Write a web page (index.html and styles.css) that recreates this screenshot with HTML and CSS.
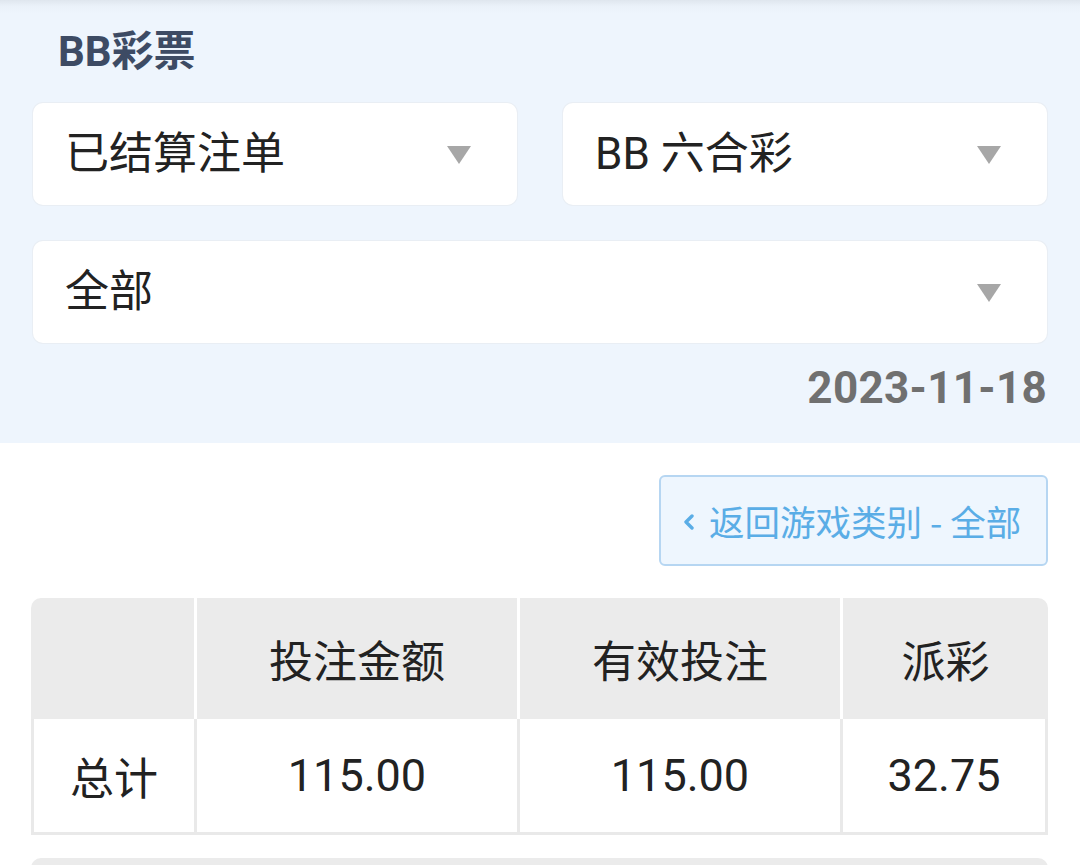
FILE: index.html
```html
<!DOCTYPE html>
<html lang="zh">
<head>
<meta charset="utf-8">
<link rel="stylesheet" href="styles.css">
</head>
<body>
<section class="top">
  <h1 class="title">BB彩票</h1>
  <div class="row two">
    <div class="select"><span>已结算注单</span><i class="caret"></i></div>
    <div class="select"><span>BB 六合彩</span><i class="caret"></i></div>
  </div>
  <div class="row one">
    <div class="select"><span>全部</span><i class="caret"></i></div>
  </div>
  <div class="date">2023-11-18</div>
</section>
<section class="main">
  <div class="back-wrap">
    <button class="back"><svg class="chev" width="12" height="16" viewBox="0 0 12 16"><polyline points="9,2 3,8 9,14" fill="none" stroke="#5aade6" stroke-width="3.4" stroke-linecap="round" stroke-linejoin="round"/></svg><span>返回游戏类别 - 全部</span></button>
  </div>
  <table class="sum">
    <colgroup><col class="c1"><col class="c2"><col class="c3"><col class="c4"></colgroup>
    <thead>
      <tr><th></th><th>投注金额</th><th>有效投注</th><th>派彩</th></tr>
    </thead>
    <tbody>
      <tr><td>总计</td><td class="num">115.00</td><td class="num">115.00</td><td class="num">32.75</td></tr>
    </tbody>
  </table>
  <div class="next"></div>
</section>
</body>
</html>
```
FILE: styles.css
```css
* { box-sizing: border-box; }
html, body { margin: 0; padding: 0; }
body {
  width: 1080px;
  height: 865px;
  overflow: hidden;
  background: #ffffff;
  font-family: "Noto Sans CJK SC", "Noto Sans", sans-serif;
  color: #222222;
}
.top {
  background: linear-gradient(to bottom, #dfe6ee 0px, #eaf1f9 6px, #eef5fd 14px);
  padding: 26px 33px 27px 33px;
}
.title {
  margin: 0 0 0 25px;
  height: 52px;
  line-height: 52px;
  font-size: 42px;
  font-weight: 700;
  color: #3d4b64;
  font-family: "Roboto", "Noto Sans CJK SC", sans-serif;
}
.row { display: grid; gap: 46px; }
.row.two { grid-template-columns: 1fr 1fr; margin-top: 25px; }
.row.one { grid-template-columns: 1fr; margin-top: 36px; }
.select {
  height: 102px;
  background: #ffffff;
  border-radius: 10px;
  box-shadow: 0 0 0 1px #e9eef4;
  display: flex;
  align-items: center;
  justify-content: space-between;
  padding: 0 46px 0 32px;
  font-size: 44px;
  font-family: "Roboto", "Noto Sans CJK SC", sans-serif;
  color: #222;
}
.select span { line-height: 1; }
.caret {
  width: 0; height: 0;
  border-left: 12px solid transparent;
  border-right: 12px solid transparent;
  border-top: 18px solid #a7a7a7;
  margin-top: 2px;
}
.date {
  margin-top: 17px;
  text-align: right;
  height: 56px;
  line-height: 56px;
  font-family: "Roboto", sans-serif;
  font-weight: 700;
  font-size: 44px;
  color: #707070;
  letter-spacing: 0.3px;
}
.main { padding: 32px 32px 0 31px; }
.back-wrap { display: flex; justify-content: flex-end; }
.back {
  width: 389px;
  height: 91px;
  background: #eef6fe;
  border: 2px solid #b6d6f2;
  border-radius: 6px;
  display: flex;
  align-items: center;
  gap: 14px;
  padding: 0 0 0 22px;
  font-family: "Noto Sans CJK SC", sans-serif;
  font-size: 35.5px;
  color: #5aade6;
}
.chev { flex: none; margin-top: 2px; }
.sum {
  margin-top: 32px;
  width: 1017px;
  table-layout: fixed;
  border-collapse: separate;
  border-spacing: 0;
}
.c1 { width: 166px; }
.c2 { width: 323px; }
.c3 { width: 323px; }
.c4 { width: 205px; }
.sum th {
  height: 121px;
  background: #ebebeb;
  font-weight: 400;
  font-size: 44px;
  color: #222;
  border-right: 3px solid #ffffff;
  padding: 0;
}
.sum th:first-child { border-top-left-radius: 10px; }
.sum th:last-child { border-right: 0; border-top-right-radius: 10px; }
.sum td {
  height: 116px;
  background: #ffffff;
  border-right: 3px solid #e9e9e9;
  border-bottom: 3px solid #e9e9e9;
  text-align: center;
  font-size: 44px;
  color: #222;
  padding: 0;
}
.sum td:first-child { border-left: 3px solid #e9e9e9; }
.sum td.num { font-family: "Roboto", sans-serif; font-size: 45px; }
.next {
  margin-top: 23px;
  height: 40px;
  background: #ebebeb;
  border-radius: 10px 10px 0 0;
}
```
